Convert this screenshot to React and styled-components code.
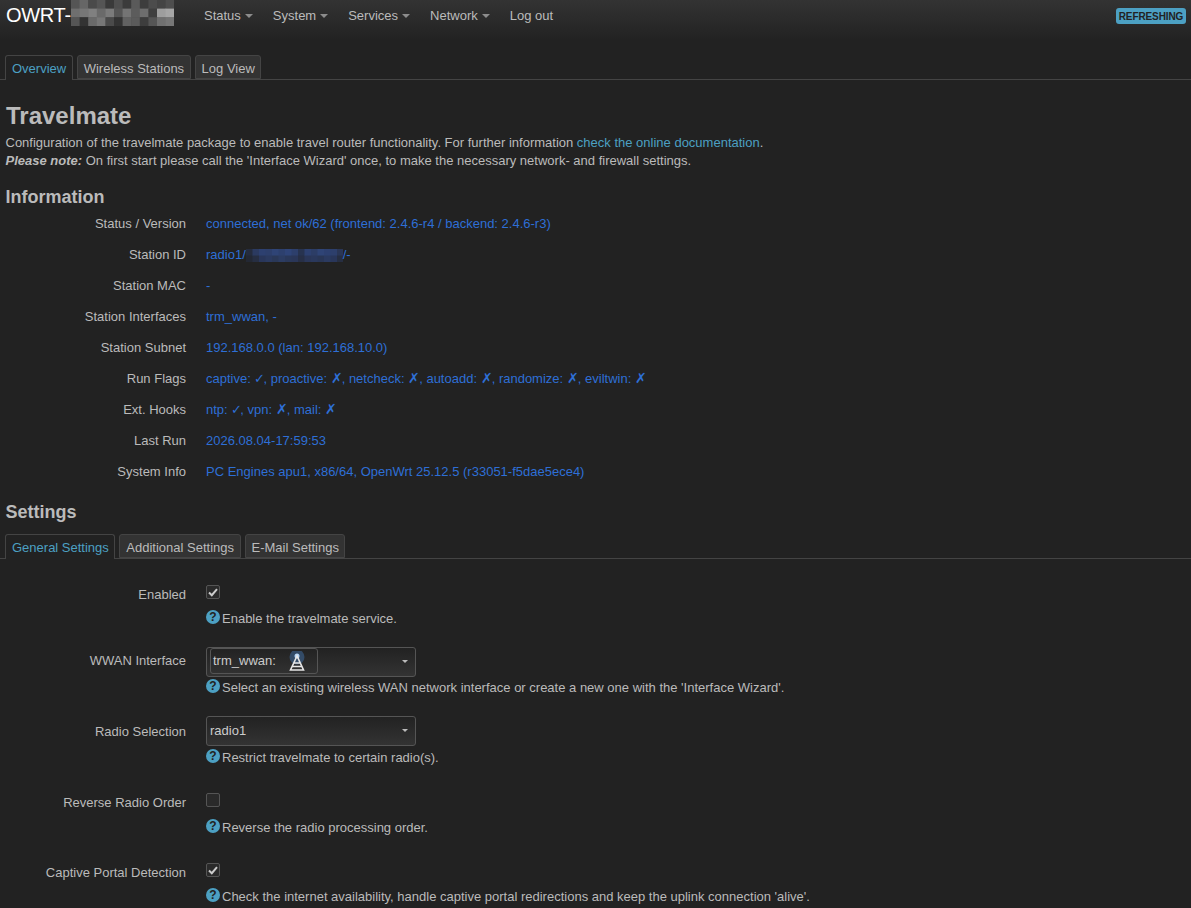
import styled, { createGlobalStyle } from "styled-components";

const GlobalStyle = createGlobalStyle`
  html, body {
    margin: 0;
    padding: 0;
    background: #222222;
    color: #bbbbbb;
    font-family: "Liberation Sans", Arial, sans-serif;
    font-size: 13px;
    line-height: 18px;
    overflow: hidden;
  }
`;

const infoRows = [
  ["Status / Version", "connected, net ok/62 (frontend: 2.4.6-r4 / backend: 2.4.6-r3)"],
  ["Station ID", "station"],
  ["Station MAC", "-"],
  ["Station Interfaces", "trm_wwan, -"],
  ["Station Subnet", "192.168.0.0 (lan: 192.168.10.0)"],
  ["Run Flags", "flags"],
  ["Ext. Hooks", "hooks"],
  ["Last Run", "2026.08.04-17:59:53"],
  ["System Info", "PC Engines apu1, x86/64, OpenWrt 25.12.5 (r33051-f5dae5ece4)"],
];

const runFlags = [
  ["captive", true],
  ["proactive", false],
  ["netcheck", false],
  ["autoadd", false],
  ["randomize", false],
  ["eviltwin", false],
];

const extHooks = [
  ["ntp", true],
  ["vpn", false],
  ["mail", false],
];

const Mosaic = ({ cells, cell, width, height }) => (
  <MosaicSvg width={width} height={height} viewBox={`0 0 ${width} ${height}`}>
    {cells.map(([x, y, c], i) => (
      <rect key={i} x={x * cell} y={y * cell} width={cell + 0.5} height={cell + 0.5} fill={c} />
    ))}
  </MosaicSvg>
);

const hostCells = [
  [0, 0, "#555"], [1, 0, "#666"], [2, 0, "#4a4a4a"], [3, 0, "#555"], [4, 0, "#3a3a3a"], [5, 0, "#4f4f4f"], [6, 0, "#3b3b3b"], [7, 0, "#5a5a5a"], [8, 0, "#3d3d3d"], [9, 0, "#4c4c4c"], [10, 0, "#444"], [11, 0, "#4e4e4e"],
  [0, 1, "#6f6f6f"], [1, 1, "#777"], [2, 1, "#808080"], [3, 1, "#6a6a6a"], [4, 1, "#7b7b7b"], [5, 1, "#555"], [6, 1, "#747474"], [7, 1, "#5c5c5c"], [8, 1, "#6e6e6e"], [9, 1, "#3f3f3f"], [10, 1, "#9e9e9e"], [11, 1, "#a6a6a6"],
  [0, 2, "#555"], [1, 2, "#333"], [2, 2, "#6a6a6a"], [3, 2, "#777"], [4, 2, "#4a4a4a"], [5, 2, "#333"], [6, 2, "#616161"], [7, 2, "#5b5b5b"], [8, 2, "#3d3d3d"], [9, 2, "#555"], [10, 2, "#707070"], [11, 2, "#777"],
];

const stationCells = Array.from({ length: 15 }, (_, x) => [
  [x, 0, ["#252c3e", "#2b3a60", "#2d4070", "#2d3f6c", "#2f4476", "#2d406e", "#2f4478", "#2d3f6c", "#273350", "#2d4070", "#2c3d66", "#2f4476", "#2d4070", "#2d3f6c", "#2a3656"][x]],
  [x, 1, ["#232834", "#262e42", "#29365a", "#2b3a60", "#2a3858", "#2c3c62", "#2a385a", "#2a3658", "#272f46", "#2a3658", "#2a385c", "#293656", "#2b3a60", "#29365a", "#262e42"][x]],
]).flat();

const Header = styled.header`
  display: flex;
  align-items: flex-start;
  height: 40px;
  padding: 0 5px 0 6px;
  background: linear-gradient(#333333, #222222);
`;

const Brand = styled.a`
  display: flex;
  align-items: flex-start;
  height: 30px;
  width: 198px;
  color: #ffffff;
  font-size: 20px;
  line-height: 30px;
  letter-spacing: -0.3px;
`;

const MosaicSvg = styled.svg`
  display: block;
  flex: none;
`;

const Nav = styled.nav`
  display: flex;
  gap: 20px;
  height: 31px;
  align-items: center;
`;

const NavItem = styled.a`
  display: flex;
  align-items: center;
  gap: 4px;
  color: #bbbbbb;
  font-size: 13px;
`;

const Caret = styled.span`
  width: 0;
  height: 0;
  margin-top: 1px;
  border-left: 4px solid transparent;
  border-right: 4px solid transparent;
  border-top: 4px solid #8c8c8c;
`;

const Badge = styled.span`
  margin: 8px 0 0 auto;
  width: 70px;
  height: 16px;
  line-height: 17px;
  text-align: center;
  letter-spacing: -0.1px;
  border-radius: 3px;
  background: #4ca0c3;
  color: #222222;
  font-size: 10px;
  font-weight: 700;
`;

const Tabs = styled.ul`
  display: flex;
  gap: 4px;
  margin: ${(p) => p.$top}px 0 0;
  padding: 0 5px;
  list-style: none;
  height: 24px;
  border-bottom: 1px solid #444444;
`;

const Tab = styled.li`
  height: ${(p) => (p.$active ? 25 : 24)}px;
  padding: 0 5.5px 0 6px;
  box-sizing: border-box;
  line-height: 25px;
  border: 1px solid #444444;
  border-bottom: ${(p) => (p.$active ? "0" : "1px solid #444444")};
  border-radius: 3px 3px 0 0;
  background: ${(p) => (p.$active ? "#222222" : "#333333")};
  color: ${(p) => (p.$active ? "#4ca0c3" : "#bbbbbb")};
  font-size: 13px;
`;

const Title = styled.h2`
  margin: 22px 0 0 6px;
  color: #bbbbbb;
  font-size: 24px;
  line-height: 28px;
  font-weight: 700;
`;

const Intro = styled.div`
  margin: 4px 0 0 5.5px;
  font-size: 13px;
  line-height: 18px;
`;

const Link = styled.a`
  color: #4ca0c3;
`;

const SectionTitle = styled.h3`
  margin: ${(p) => p.$top}px 0 0 5.5px;
  color: #bbbbbb;
  font-size: 18px;
  line-height: 20px;
  font-weight: 700;
`;

const Row = styled.div`
  display: grid;
  grid-template-columns: 186px 1fr;
  column-gap: 20px;
  min-height: 18px;
  margin-bottom: ${(p) => p.$gap ?? 13}px;
`;

const Label = styled.label`
  text-align: right;
  color: #bbbbbb;
  padding-top: ${(p) => p.$top ?? 0}px;
`;

const InfoList = styled.div`
  margin-top: 8px;
`;

const Value = styled.div`
  display: flex;
  align-items: center;
  color: #2e6fd6;
  font-size: 13px;
  white-space: pre;
`;

const Mark = styled.span`
  display: inline-block;
  width: ${(p) => (p.$on ? 9 : 11)}px;
  font-size: ${(p) => (p.$on ? 13 : 14)}px;
  line-height: 14px;
`;

const Form = styled.div`
  margin-top: 26px;
`;

const Field = styled.div`
  display: flex;
  flex-direction: column;
  align-items: flex-start;
`;

const CheckBox = styled.span`
  display: flex;
  align-items: center;
  justify-content: center;
  box-sizing: border-box;
  width: 14px;
  height: 14px;
  border: 1px solid #555555;
  border-radius: 2px;
  background: #2a2a2a;
`;

const Select = styled.div`
  position: relative;
  display: flex;
  align-items: center;
  width: 210px;
  height: 30px;
  box-sizing: border-box;
  padding-left: 3px;
  border: 1px solid #555555;
  border-radius: 3px;
  background: linear-gradient(#222222, #333333);
  color: #cccccc;
  font-size: 13px;
`;

const SelectCaret = styled.span`
  position: absolute;
  right: 7px;
  top: 12px;
  border-left: 3px solid transparent;
  border-right: 3px solid transparent;
  border-top: 3px solid #bbbbbb;
`;

const Chip = styled.span`
  display: flex;
  align-items: center;
  width: 108px;
  height: 26px;
  margin-top: -2px;
  box-sizing: border-box;
  padding-left: 2px;
  border: 1px solid #555555;
  border-radius: 3px;
`;

const Help = styled.div`
  display: flex;
  align-items: flex-start;
  gap: 2px;
  margin-top: ${(p) => p.$top}px;
  color: #bbbbbb;
  font-size: 13px;
  white-space: nowrap;
`;

const HelpIcon = styled.span`
  display: flex;
  align-items: center;
  justify-content: center;
  width: 14px;
  height: 14px;
  border-radius: 50%;
  background: #4ca0c3;
  color: #222222;
  font-size: 12px;
  font-weight: 700;
  line-height: 14px;
`;

const Tick = () => (
  <svg width="10" height="9" viewBox="0 0 10 9">
    <path d="M1 4.5 L3.8 7.2 L9 1.2" fill="none" stroke="#cccccc" strokeWidth="2" />
  </svg>
);

const Antenna = () => (
  <AntennaSvg width="18" height="20" viewBox="0 0 18 20">
    <circle cx="9" cy="6" r="7.5" fill="#3f6fa8" opacity="0.5" />
    <circle cx="9" cy="5" r="2.5" fill="#b4d4f5" />
    <path d="M9 5 L2.5 19 H15.5 Z M6 12 H12 M4.5 15.5 H13.5" fill="none" stroke="#e6e6e6" strokeWidth="1.6" />
  </AntennaSvg>
);

const AntennaSvg = styled.svg`
  margin-left: 12px;
`;

const HelpText = ({ top = 2, children }) => (
  <Help $top={top}>
    <HelpIcon>?</HelpIcon>
    <span>{children}</span>
  </Help>
);

const FlagList = ({ items }) =>
  items.map(([name, on], i) => (
    <span key={name}>
      {name}: <Mark $on={on}>{on ? "✓" : "✗"}</Mark>
      {i < items.length - 1 ? ", " : ""}
    </span>
  ));

const renderValue = (value) => {
  if (value === "station") {
    return (
      <>
        radio1/
        <Mosaic cells={stationCells} cell={6.5} width={97} height={13} />
        /-
      </>
    );
  }
  if (value === "flags") return <FlagList items={runFlags} />;
  if (value === "hooks") return <FlagList items={extHooks} />;
  return value;
};

const App = () => (
  <>
    <GlobalStyle />
    <Header>
      <Brand>
        OWRT-
        <Mosaic cells={hostCells} cell={8.6} width={103} height={26} />
      </Brand>
      <Nav>
        {["Status", "System", "Services", "Network"].map((name) => (
          <NavItem key={name}>
            {name}
            <Caret />
          </NavItem>
        ))}
        <NavItem>Log out</NavItem>
      </Nav>
      <Badge>REFRESHING</Badge>
    </Header>

    <Tabs $top={15}>
      <Tab $active>Overview</Tab>
      <Tab>Wireless Stations</Tab>
      <Tab>Log View</Tab>
    </Tabs>

    <Title>Travelmate</Title>
    <Intro>
      Configuration of the travelmate package to enable travel router functionality. For further
      information <Link>check the online documentation</Link>.
      <br />
      <b>
        <i>Please note:</i>
      </b>{" "}
      On first start please call the 'Interface Wizard' once, to make the necessary network- and
      firewall settings.
    </Intro>

    <SectionTitle $top={17}>Information</SectionTitle>
    <InfoList>
      {infoRows.map(([label, value]) => (
        <Row key={label}>
          <Label>{label}</Label>
          <Value>{renderValue(value)}</Value>
        </Row>
      ))}
    </InfoList>

    <SectionTitle $top={21}>Settings</SectionTitle>
    <Tabs $top={12}>
      <Tab $active>General Settings</Tab>
      <Tab>Additional Settings</Tab>
      <Tab>E-Mail Settings</Tab>
    </Tabs>

    <Form>
      <Row $gap={19}>
        <Label $top={1}>Enabled</Label>
        <Field>
          <CheckBox>
            <Tick />
          </CheckBox>
          <HelpText top={11}>Enable the travelmate service.</HelpText>
        </Field>
      </Row>
      <Row $gap={19}>
        <Label $top={5}>WWAN Interface</Label>
        <Field>
          <Select>
            <Chip>
              trm_wwan:
              <Antenna />
            </Chip>
            <SelectCaret />
          </Select>
          <HelpText>Select an existing wireless WAN network interface or create a new one with the 'Interface Wizard'.</HelpText>
        </Field>
      </Row>
      <Row $gap={26}>
        <Label $top={7}>Radio Selection</Label>
        <Field>
          <Select>
            radio1
            <SelectCaret />
          </Select>
          <HelpText top={3}>Restrict travelmate to certain radio(s).</HelpText>
        </Field>
      </Row>
      <Row $gap={26}>
        <Label $top={1}>Reverse Radio Order</Label>
        <Field>
          <CheckBox />
          <HelpText top={12}>Reverse the radio processing order.</HelpText>
        </Field>
      </Row>
      <Row $gap={0}>
        <Label $top={1}>Captive Portal Detection</Label>
        <Field>
          <CheckBox>
            <Tick />
          </CheckBox>
          <HelpText top={11}>Check the internet availability, handle captive portal redirections and keep the uplink connection 'alive'.</HelpText>
        </Field>
      </Row>
    </Form>
  </>
);

export default App;
